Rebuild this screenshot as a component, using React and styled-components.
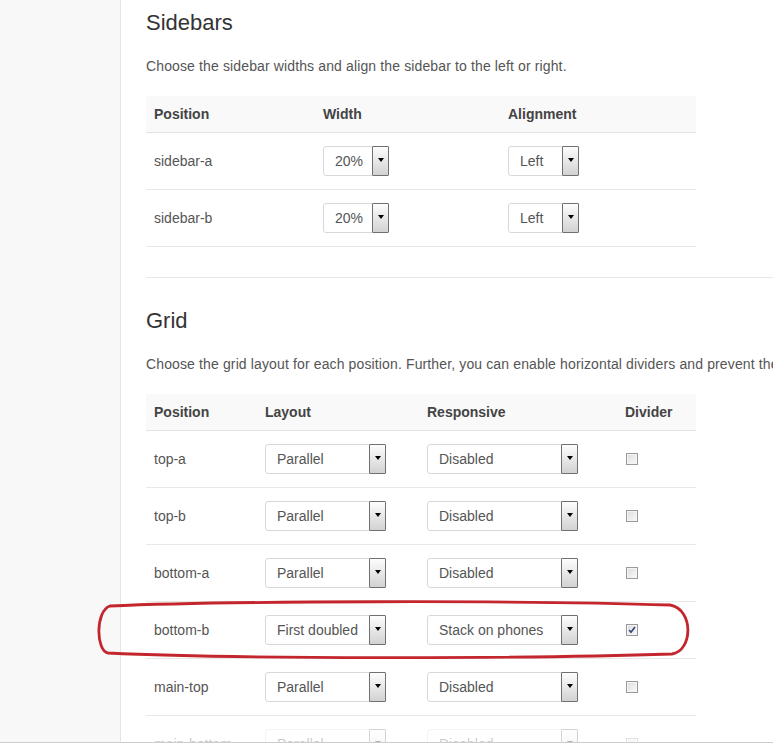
import React from "react";
import styled, { createGlobalStyle } from "styled-components";

const GlobalStyle = createGlobalStyle`
  html, body { margin: 0; padding: 0; background: #fff; overflow: hidden; }
  body { font-family: "Liberation Sans", Arial, sans-serif; }
  * { box-sizing: border-box; }
`;

const Page = styled.div`
  position: relative;
  display: flex;
  width: 773px;
  height: 743px;
  border-bottom: 1px solid #cdcdcd;
  overflow: hidden;
`;

const Side = styled.div`
  flex: 0 0 121px;
  background: #f8f8f8;
  border-right: 1px solid #e6e6e6;
`;

const Main = styled.div`
  flex: 1;
  min-width: 0;
  padding: 10px 0 0 25px;
  white-space: nowrap;
`;

const Heading = styled.h2`
  margin: 0;
  font-size: 22px;
  line-height: 26px;
  font-weight: 400;
  color: #333;
`;

const Desc = styled.p`
  margin: 20px 0 20px;
  font-size: 14px;
  line-height: 20px;
  letter-spacing: 0.13px;
  color: #555;
`;

const Table = styled.div`
  width: 550px;
`;

const Row = styled.div`
  display: grid;
  grid-template-columns: ${(p) => p.$cols};
  align-items: center;
  height: ${(p) => (p.$head ? "37px" : "57px")};
  background: ${(p) => (p.$head ? "#f9f9f9" : "#fff")};
  border-bottom: 1px solid ${(p) => (p.$head ? "#e2e2e2" : "#e8e8e8")};
  opacity: ${(p) => (p.$faded ? 0.3 : 1)};
`;

const Cell = styled.div`
  padding: 0 8px;
  font-size: 14px;
  color: ${(p) => (p.$head ? "#444" : "#555")};
  font-weight: ${(p) => (p.$head ? 700 : 400)};
  display: flex;
  align-items: center;
`;

const Rule = styled.div`
  margin: 30px 0;
  border-top: 1px solid #e8e8e8;
`;

const SelectBox = styled.div`
  display: inline-flex;
  align-items: stretch;
  justify-content: space-between;
  width: ${(p) => p.$w}px;
  height: 30px;
  border: 1px solid #d8d8d8;
  border-radius: 3px;
  background: #fff;
  font-size: 14px;
  color: #555;
  padding-left: 11px;
`;

const SelectText = styled.span`
  align-self: center;
`;

const Arrow = styled.span`
  flex: 0 0 17px;
  margin: -1px -1px -1px 0;
  border: 1px solid #707070;
  border-radius: 1px;
  background: linear-gradient(#fdfdfd, #d2d2d2);
  display: flex;
  align-items: center;
  justify-content: center;
  &::after {
    content: "";
    border-left: 3.5px solid transparent;
    border-right: 3.5px solid transparent;
    border-top: 4px solid #000;
    margin-bottom: 2px;
  }
`;

const Check = styled.span`
  display: inline-flex;
  align-items: center;
  justify-content: center;
  width: 12px;
  height: 12px;
  margin-left: 1px;
  border: 1px solid #9a9a9a;
  background: linear-gradient(135deg, #dcdcdc, #fbfbfb);
  box-shadow: inset 0 0 0 1px #f4f4f4;
`;

const Overlay = styled.svg`
  position: absolute;
  left: 0;
  top: 0;
  pointer-events: none;
`;

function Select({ w, children }) {
  return (
    <SelectBox $w={w}>
      <SelectText>{children}</SelectText>
      <Arrow />
    </SelectBox>
  );
}

function Checkbox({ checked }) {
  return (
    <Check>
      {checked && (
        <svg width="8" height="8" viewBox="0 0 9 9">
          <path d="M1.3 4.6 L3.4 7 L7.8 1.2" fill="none" stroke="#33427a" strokeWidth="1.8" />
        </svg>
      )}
    </Check>
  );
}

const sideCols = "169px 185px 196px";
const gridCols = "111px 162px 198px 79px";

const sidebars = ["sidebar-a", "sidebar-b"];
const grid = [
  ["top-a", "Parallel", "Disabled", false],
  ["top-b", "Parallel", "Disabled", false],
  ["bottom-a", "Parallel", "Disabled", false],
  ["bottom-b", "First doubled", "Stack on phones", true],
  ["main-top", "Parallel", "Disabled", false],
  ["main-bottom", "Parallel", "Disabled", false, true],
];

export default function App() {
  return (
    <>
      <GlobalStyle />
      <Page>
        <Side />
        <Main>
          <Heading>Sidebars</Heading>
          <Desc>Choose the sidebar widths and align the sidebar to the left or right.</Desc>
          <Table>
            <Row $head $cols={sideCols}>
              <Cell $head>Position</Cell>
              <Cell $head>Width</Cell>
              <Cell $head>Alignment</Cell>
            </Row>
            {sidebars.map((s) => (
              <Row key={s} $cols={sideCols}>
                <Cell>{s}</Cell>
                <Cell>
                  <Select w={66}>20%</Select>
                </Cell>
                <Cell>
                  <Select w={71}>Left</Select>
                </Cell>
              </Row>
            ))}
          </Table>
          <Rule />
          <Heading>Grid</Heading>
          <Desc>
            Choose the grid layout for each position. Further, you can enable horizontal dividers and prevent the
            columns from stacking on phones.
          </Desc>
          <Table>
            <Row $head $cols={gridCols}>
              <Cell $head>Position</Cell>
              <Cell $head>Layout</Cell>
              <Cell $head>Responsive</Cell>
              <Cell $head>Divider</Cell>
            </Row>
            {grid.map(([pos, layout, resp, checked, faded]) => (
              <Row key={pos} $cols={gridCols} $faded={faded}>
                <Cell>{pos}</Cell>
                <Cell>
                  <Select w={121}>{layout}</Select>
                </Cell>
                <Cell>
                  <Select w={151}>{resp}</Select>
                </Cell>
                <Cell>
                  <Checkbox checked={checked} />
                </Cell>
              </Row>
            ))}
          </Table>
        </Main>
        <Overlay width="773" height="742" viewBox="0 0 773 742">
          <path
            d="M110 606 C 220 601, 520 600, 670 605 C 694 609, 693 651, 672 654 C 520 659, 230 659, 108 653 C 96 651, 95 611, 110 606 Z"
            fill="none"
            stroke="#c4262e"
            strokeWidth="2.8"
          />
        </Overlay>
      </Page>
    </>
  );
}
